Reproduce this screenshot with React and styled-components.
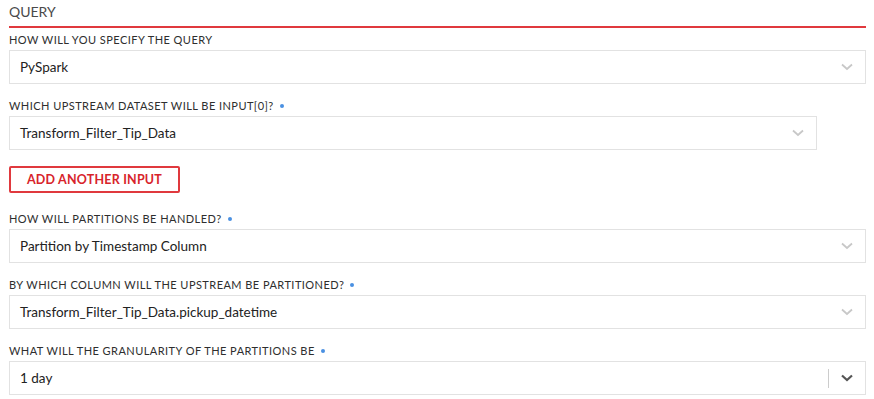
import React from 'react';
import styled, { createGlobalStyle } from 'styled-components';

const GlobalStyle = createGlobalStyle`
    html, body {
        margin: 0;
        padding: 0;
        background: #fff;
        font-family: Lato, "Noto Sans", sans-serif;
    }
`;

const Panel = styled.div`
    padding: 0 8px 0 9px;
    width: 874px;
    box-sizing: border-box;
`;

const Heading = styled.div`
    font-size: 14px;
    line-height: 18px;
    padding-top: 3px;
    padding-bottom: 5px;
    color: #4a4a4a;
    border-bottom: 2px solid #e0393e;
    margin-bottom: 5px;
`;

const Field = styled.div`
    width: ${props => props.width || '100%'};
    margin-bottom: 15px;
`;

const Label = styled.div`
    font-size: 11px;
    line-height: 14px;
    color: #2e2e2e;
    letter-spacing: 0.45px;
    text-transform: uppercase;
    margin-bottom: 3px;
    display: flex;
    align-items: center;
`;

const Dot = styled.span`
    display: inline-block;
    width: 4px;
    height: 4px;
    border-radius: 50%;
    background: #4a90e2;
    margin-left: 6px;
`;

const SelectBox = styled.div`
    height: 34px;
    box-sizing: border-box;
    border: 1px solid #e2e2e2;
    display: flex;
    align-items: center;
    padding-left: 10px;
    font-size: 13.5px;
    color: #222;
`;

const Value = styled.div`
    flex: 1;
`;

const Separator = styled.span`
    width: 1px;
    height: 19px;
    background: #ccc;
`;

const Arrow = styled.span`
    width: 36px;
    display: flex;
    justify-content: center;
    align-items: center;
    color: ${props => (props.dark ? '#555' : '#c8c8c8')};
`;

const AddButton = styled.button`
    height: 27px;
    width: 171px;
    box-sizing: border-box;
    border: 2px solid #e0393e;
    border-radius: 2px;
    background: #fff;
    color: #d8242b;
    font-family: inherit;
    font-weight: 700;
    font-size: 12.5px;
    letter-spacing: 0.2px;
    padding: 0;
    margin: 1px 0 19px;
    cursor: pointer;
`;

const Chevron = ({ dark }) => (
    <svg width="12" height="8" viewBox="0 0 12 8">
        <path d="M1 1.5 L6 6 L11 1.5" fill="none" stroke="currentColor" strokeWidth={dark ? 2.2 : 1.8} />
    </svg>
);

const fields = [
    { label: 'How will you specify the query', value: 'PySpark' },
    { label: 'Which upstream dataset will be input[0]?', value: 'Transform_Filter_Tip_Data', dot: true, width: '808px', button: true },
    { label: 'How will partitions be handled?', value: 'Partition by Timestamp Column', dot: true },
    { label: 'By which column will the upstream be partitioned?', value: 'Transform_Filter_Tip_Data.pickup_datetime', dot: true },
    { label: 'What will the granularity of the partitions be', value: '1 day', dot: true, clearable: true },
];

const App = () => {
    return (
        <Panel>
            <GlobalStyle />
            <Heading>QUERY</Heading>
            {fields.map(f => (
                <React.Fragment key={f.label}>
                    <Field width={f.width}>
                        <Label>
                            {f.label}
                            {f.dot && <Dot />}
                        </Label>
                        <SelectBox>
                            <Value>{f.value}</Value>
                            {f.clearable && <Separator />}
                            <Arrow dark={f.clearable}>
                                <Chevron dark={f.clearable} />
                            </Arrow>
                        </SelectBox>
                    </Field>
                    {f.button && <AddButton>ADD ANOTHER INPUT</AddButton>}
                </React.Fragment>
            ))}
        </Panel>
    );
}

export default App;
